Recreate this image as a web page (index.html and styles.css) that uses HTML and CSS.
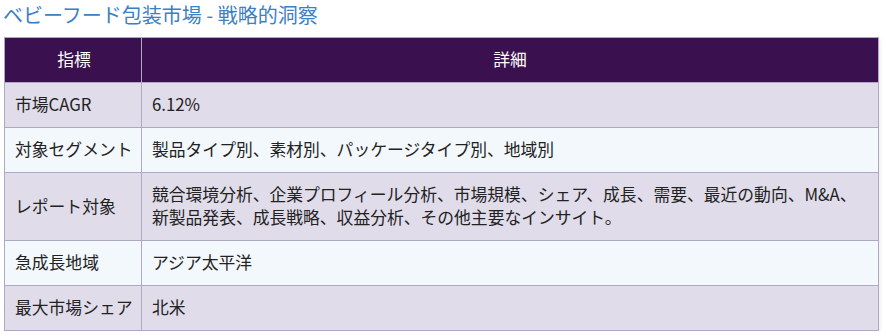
FILE: index.html
```html
<!DOCTYPE html>
<html lang="ja">
<head>
<meta charset="utf-8">
<link rel="stylesheet" href="styles.css">
</head>
<body>
<h2 class="title">ベビーフード包装市場 - 戦略的洞察</h2>
<table class="insights">
  <thead>
    <tr><th class="col-key">指標</th><th>詳細</th></tr>
  </thead>
  <tbody>
    <tr><td class="key">市場CAGR</td><td>6.12%</td></tr>
    <tr><td class="key">対象セグメント</td><td>製品タイプ別、素材別、パッケージタイプ別、地域別</td></tr>
    <tr><td class="key">レポート対象</td><td>競合環境分析、企業プロフィール分析、市場規模、シェア、成長、需要、最近の動向、M&amp;A、新製品発表、成長戦略、収益分析、その他主要なインサイト。</td></tr>
    <tr><td class="key">急成長地域</td><td>アジア太平洋</td></tr>
    <tr><td class="key">最大市場シェア</td><td>北米</td></tr>
  </tbody>
</table>
</body>
</html>
```
FILE: styles.css
```css
html, body {
  margin: 0;
  padding: 0;
  background: #ffffff;
}
body {
  font-family: "Noto Sans CJK JP", "Noto Sans", sans-serif;
  color: #222222;
}
.title {
  margin: 0 0 8px 3px;
  font-size: 20px;
  font-weight: 400;
  line-height: 29px;
  color: #3b7fc4;
}
.insights {
  margin-left: 4px;
  width: 875px;
  border-collapse: collapse;
  font-size: 16.8px;
  box-shadow: 2px 2px 3px rgba(0,0,0,0.06);
}
.insights th,
.insights td {
  border: 1px solid #aea8c4;
  padding: 10px 10px 11px 10px;
  line-height: 23px;
  text-align: left;
  vertical-align: middle;
}
.insights th {
  background: #3a104e;
  color: #ffffff;
  font-weight: 400;
  text-align: center;
  border-color: #aea8c4;
}
.insights .col-key {
  width: 118px;
  padding-right: 8px;
}
.insights .key {
  white-space: nowrap;
  padding-right: 8px;
}
.insights tbody tr:nth-child(odd) td {
  background: #e0dcea;
}
.insights tbody tr:nth-child(even) td {
  background: #f3f8fc;
}
```
